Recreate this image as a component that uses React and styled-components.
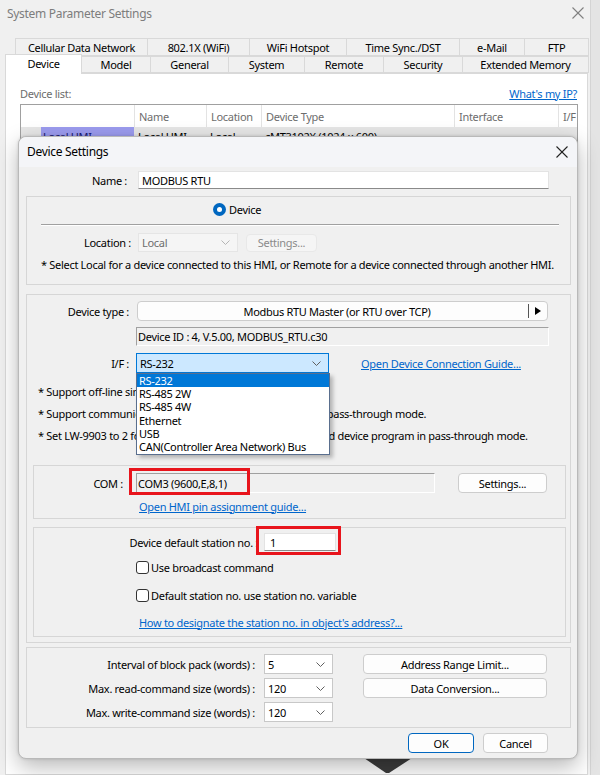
import React from "react";
import styled, { createGlobalStyle } from "styled-components";

const FONT = `"Segoe UI", "Noto Sans", "Open Sans", sans-serif`;

const GlobalStyle = createGlobalStyle`
  html, body { margin: 0; padding: 0; background: #ececec; }
  body { font-family: ${FONT}; font-size: 11px; letter-spacing: -0.3px; color: #000; }
  * { box-sizing: border-box; }
`;

const Screen = styled.div`
  position: relative;
  width: 600px;
  height: 775px;
  overflow: hidden;
  display: flex;
`;

const Window = styled.div`
  width: 591px;
  height: 775px;
  background: #f0f0f0;
  border-right: 1px solid #d4d4d4;
  display: flex;
  flex-direction: column;
`;

const Backdrop = styled.div`
  flex: 1;
  background: #e4e4e4;
`;

const WinTitleBar = styled.div`
  height: 38px;
  flex: none;
  display: flex;
  align-items: flex-start;
  justify-content: space-between;
  padding: 5px 6px 0 7px;
  color: #7d7d7d;
  font-size: 12px;
`;

const CloseGlyph = styled.svg`
  width: 12px;
  height: 12px;
  margin-top: 2px;
  stroke: ${(p) => p.$color || "#808080"};
  stroke-width: 1.1;
`;

const TabRow = styled.div`
  display: flex;
  height: ${(p) => p.$h}px;
  margin-left: ${(p) => p.$left}px;
  align-items: flex-end;
`;

const Tab = styled.div`
  width: ${(p) => p.$w}px;
  height: ${(p) => (p.$active ? p.$h + 3 : p.$h)}px;
  margin-left: -1px;
  margin-bottom: ${(p) => (p.$active ? -1 : 0)}px;
  border: 1px solid #d9d9d9;
  border-bottom: ${(p) => (p.$active ? "none" : "1px solid #d9d9d9")};
  background: ${(p) => (p.$active ? "#ffffff" : "#f0f0f0")};
  display: flex;
  align-items: center;
  justify-content: center;
  padding-bottom: ${(p) => (p.$active ? 2 : 0)}px;
  font-size: 11px;
  color: #000;
  position: relative;
  z-index: ${(p) => (p.$active ? 2 : 1)};
  &:first-child { margin-left: 0; }
`;

const Panel = styled.div`
  flex: 1;
  margin: 0 2px 0 5px;
  background: #ffffff;
  border: 1px solid #d9d9d9;
  padding: 11px 10px 0 14px;
`;

const ListHeader = styled.div`
  display: flex;
  justify-content: space-between;
  align-items: center;
  height: 16px;
  color: #6d6d6d;
`;

const Link = styled.span`
  color: #0066cc;
  text-decoration: underline;
  text-underline-offset: 1px;
  white-space: nowrap;
  margin-left: ${(p) => p.$ml || 0}px;
`;

const Table = styled.div`
  margin-top: 3px;
  width: 558px;
  border: 1px solid #a0a0a0;
  border-bottom: none;
`;

const TRow = styled.div`
  display: grid;
  grid-template-columns: 113px 72px 55px 193px 104px 1fr;
  height: ${(p) => p.$h}px;
  background: ${(p) => p.$bg || "#ffffff"};
`;

const TCell = styled.div`
  padding-left: 4px;
  display: flex;
  align-items: center;
  color: ${(p) => p.$color || "#000"};
  border-left: ${(p) => (p.$sep ? "1px solid #e3e3e3" : "none")};
  white-space: nowrap;
  overflow: hidden;
`;

const FirstCell = styled.div`
  display: flex;
  align-items: center;
  padding-left: 6px;
`;

const Chevron = styled.span`
  width: 14px;
  font-size: 10px;
  color: #222;
`;

const HmiHighlight = styled.div`
  flex: 1;
  height: 100%;
  background: #9b9bee;
  color: #1a1a6e;
  padding-left: 2px;
  display: flex;
  align-items: center;
`;

/* ---------- dialog ---------- */

const Dialog = styled.div`
  position: absolute;
  left: 18px;
  top: 136px;
  width: 560px;
  height: 623px;
  background: #f0f0f0;
  border: 1px solid #b9b9b9;
  border-radius: 8px;
  box-shadow: 0 8px 22px rgba(0, 0, 0, 0.28), 0 0 3px rgba(0, 0, 0, 0.15);
  display: flex;
  flex-direction: column;
  z-index: 5;
`;

const DlgTitle = styled.div`
  height: 30px;
  flex: none;
  display: flex;
  align-items: center;
  justify-content: space-between;
  padding: 0 9px 2px 8px;
  background: #f4f5f8;
  border-radius: 8px 8px 0 0;
  font-size: 12px;
`;

const DlgBody = styled.div`
  padding: 0 6px 0 7px;
  display: flex;
  flex-direction: column;
`;

const Row = styled.div`
  display: flex;
  align-items: center;
  position: relative;
  margin-top: ${(p) => p.$mt || 0}px;
  margin-left: ${(p) => p.$ml || 0}px;
  height: ${(p) => p.$h || 20}px;
`;

const Label = styled.div`
  width: ${(p) => p.$w}px;
  flex: none;
  text-align: right;
  white-space: nowrap;
  margin-right: ${(p) => p.$gap || 0}px;
  color: #000;
`;

const TextInput = styled.div`
  width: ${(p) => p.$w}px;
  height: ${(p) => p.$h || 18}px;
  background: #ffffff;
  border: 1px solid #e3e3e3;
  border-bottom: 1px solid #8a8a8a;
  display: flex;
  align-items: center;
  padding-left: ${(p) => p.$pl || 3}px;
`;

const ReadOnlyField = styled.div`
  width: ${(p) => p.$w}px;
  height: ${(p) => p.$h || 19}px;
  margin-left: ${(p) => p.$ml || 0}px;
  background: #f0f0f0;
  border-top: 1px solid #a0a0a0;
  border-left: 1px solid #a0a0a0;
  border-right: 1px solid #ffffff;
  border-bottom: 1px solid #ffffff;
  display: flex;
  align-items: center;
  padding-left: 1px;
  white-space: nowrap;
`;

const Combo = styled.div`
  position: relative;
  width: ${(p) => p.$w}px;
  height: ${(p) => p.$h || 20}px;
  flex: none;
  background: ${(p) => (p.$focus ? "#cce8ff" : p.$disabled ? "#f5f5f5" : "#ffffff")};
  border: 1px solid ${(p) => (p.$focus ? "#0078d7" : p.$disabled ? "#e5e5e5" : "#c8c8c8")};
  color: ${(p) => (p.$disabled ? "#6d6d6d" : "#000")};
  display: flex;
  align-items: center;
  justify-content: space-between;
  padding: 0 7px 0 3px;
`;

const ChevronSvg = styled.svg`
  width: 9px;
  height: 5px;
  fill: none;
  stroke: ${(p) => (p.$disabled ? "#b5b5b5" : "#606060")};
  stroke-width: 1;
`;

const Button = styled.div`
  width: ${(p) => p.$w}px;
  height: ${(p) => p.$h || 20}px;
  flex: none;
  margin-left: ${(p) => p.$ml || 0}px;
  background: ${(p) => (p.$disabled ? "#f5f5f5" : "#fdfdfd")};
  border: ${(p) => (p.$primary ? "1.5px solid #0067c0" : "1px solid " + (p.$disabled ? "#e8e8e8" : "#cdcdcd"))};
  border-radius: 4px;
  color: ${(p) => (p.$disabled ? "#8a8a8a" : "#000")};
  display: flex;
  align-items: center;
  justify-content: center;
  white-space: nowrap;
`;

const Group = styled.div`
  position: relative;
  margin-top: ${(p) => p.$mt || 0}px;
  height: ${(p) => p.$h}px;
  border: 1px solid #d6d6d6;
  display: flex;
  flex-direction: column;
  padding: ${(p) => p.$pad || "0"};
`;

const Separator = styled.div`
  margin: 7px 11px 0 14px;
  border-top: 1px solid #a0a0a0;
  border-bottom: 1px solid #ffffff;
`;

const Note = styled.div`
  margin-left: ${(p) => p.$ml || 0}px;
  margin-top: ${(p) => p.$mt || 0}px;
  height: ${(p) => p.$h || 22}px;
  display: flex;
  align-items: center;
  white-space: nowrap;
`;

const Radio = styled.span`
  width: 13px;
  height: 13px;
  border-radius: 50%;
  background: #0067c0;
  display: inline-flex;
  align-items: center;
  justify-content: center;
  margin-right: 3px;
  &::after {
    content: "";
    width: 5px;
    height: 5px;
    border-radius: 50%;
    background: #ffffff;
  }
`;

const Checkbox = styled.span`
  width: 13px;
  height: 13px;
  border: 1px solid #333333;
  border-radius: 3px;
  background: #ffffff;
  margin-right: 2px;
  flex: none;
`;

const DevTypeButton = styled.div`
  width: 411px;
  height: 20px;
  background: #fdfdfd;
  border: 1px solid #cdcdcd;
  border-radius: 4px;
  display: flex;
  align-items: center;
`;

const DevTypeText = styled.div`
  flex: 1;
  text-align: center;
  padding-left: 8px;
`;

const DevTypeArrow = styled.div`
  width: 18px;
  height: 14px;
  border-left: 1px solid #555;
  display: flex;
  align-items: center;
  justify-content: center;
  margin-right: 1px;
`;

const DropList = styled.div`
  position: absolute;
  left: -1px;
  top: 19px;
  width: 194px;
  background: #ffffff;
  border: 1px solid #5a6f8e;
  box-shadow: 3px 3px 4px rgba(0, 0, 0, 0.25);
  z-index: 10;
  padding-bottom: 1px;
`;

const DropItem = styled.div`
  height: 13.2px;
  line-height: 13px;
  padding-left: 2px;
  font-size: 11px;
  background: ${(p) => (p.$sel ? "#0078d7" : "transparent")};
  color: ${(p) => (p.$sel ? "#ffffff" : "#000")};
  white-space: nowrap;
`;

const RedMark = styled.span`
  position: absolute;
  left: ${(p) => p.$l}px;
  top: ${(p) => p.$t}px;
  width: ${(p) => p.$w}px;
  height: ${(p) => p.$h}px;
  border: 3px solid #e8141c;
  pointer-events: none;
`;

const Grid3 = styled.div`
  display: grid;
  grid-template-columns: 228px 69px 184px;
  column-gap: 9px;
  grid-auto-rows: 20px;
  row-gap: 4px;
  margin-top: 6px;
  align-items: center;
  & > :nth-child(3n) { margin-left: 21px; }
`;

const Footer = styled.div`
  display: flex;
  justify-content: flex-end;
  gap: 9px;
  margin-top: 5px;
  padding-right: 23px;
`;

const CursorShape = styled.svg`
  position: absolute;
  left: 364px;
  top: 758px;
  width: 48px;
  height: 17px;
  z-index: 1;
`;

const Chev = ({ disabled }) => (
  <ChevronSvg $disabled={disabled} viewBox="0 0 9 5">
    <polyline points="0.5,0.5 4.5,4.5 8.5,0.5" />
  </ChevronSvg>
);

const row1 = [
  ["Cellular Data Network", 133],
  ["802.1X (WiFi)", 103],
  ["WiFi Hotspot", 98],
  ["Time Sync./DST", 114],
  ["e-Mail", 66],
  ["FTP", 65],
];
const row2 = [
  ["Device", 77],
  ["Model", 70],
  ["General", 79],
  ["System", 77],
  ["Remote", 80],
  ["Security", 80],
  ["Extended Memory", 127],
];

const ifOptions = ["RS-232", "RS-485 2W", "RS-485 4W", "Ethernet", "USB", "CAN(Controller Area Network) Bus"];

export default function App() {
  return (
    <Screen>
      <GlobalStyle />
      <Window>
        <WinTitleBar>
          <span>System Parameter Settings</span>
          <CloseGlyph viewBox="0 0 12 12">
            <line x1="0.5" y1="0.5" x2="11.5" y2="11.5" />
            <line x1="11.5" y1="0.5" x2="0.5" y2="11.5" />
          </CloseGlyph>
        </WinTitleBar>
        <TabRow $h={18} $left={15}>
          {row1.map(([t, w]) => (
            <Tab key={t} $w={w} $h={18}>{t}</Tab>
          ))}
        </TabRow>
        <TabRow $h={17} $left={5}>
          {row2.map(([t, w], i) => (
            <Tab key={t} $w={w} $h={17} $active={i === 0}>{t}</Tab>
          ))}
        </TabRow>
        <Panel>
          <ListHeader>
            <span>Device list:</span>
            <Link>What's my IP?</Link>
          </ListHeader>
          <Table>
            <TRow $h={22}>
              <TCell />
              <TCell $sep $color="#6d6d6d">Name</TCell>
              <TCell $sep $color="#6d6d6d">Location</TCell>
              <TCell $sep $color="#6d6d6d">Device Type</TCell>
              <TCell $sep $color="#6d6d6d">Interface</TCell>
              <TCell $sep $color="#6d6d6d">I/F</TCell>
            </TRow>
            <TRow $h={18} $bg="#e6e6e6">
              <FirstCell>
                <Chevron>⌄</Chevron>
                <HmiHighlight>Local HMI</HmiHighlight>
              </FirstCell>
              <TCell>Local HMI</TCell>
              <TCell>Local</TCell>
              <TCell>cMT3102X (1024 x 600)</TCell>
              <TCell>-</TCell>
              <TCell>-</TCell>
            </TRow>
          </Table>
        </Panel>
      </Window>
      <Backdrop />

      <CursorShape viewBox="0 0 48 17">
        <polygon points="0,0 48,0 25,15 22,15" fill="#3c3c3c" />
      </CursorShape>

      <Dialog>
        <DlgTitle>
          <span>Device Settings</span>
          <CloseGlyph $color="#222" viewBox="0 0 12 12">
            <line x1="0.5" y1="0.5" x2="11.5" y2="11.5" />
            <line x1="11.5" y1="0.5" x2="0.5" y2="11.5" />
          </CloseGlyph>
        </DlgTitle>
        <DlgBody>
          <Row $mt={4} $h={18}>
            <Label $w={101} $gap={11}>Name :</Label>
            <TextInput $w={411}>MODBUS RTU</TextInput>
          </Row>

          <Group $mt={7} $h={89}>
            <Row $mt={4} $h={16} $ml={186}>
              <Radio />
              <span>Device</span>
            </Row>
            <Separator />
            <Row $mt={7} $h={19}>
              <Label $w={104} $gap={7}>Location :</Label>
              <Combo $w={100} $h={19} $disabled>
                <span>Local</span>
                <Chev disabled />
              </Combo>
              <Button $w={71} $h={18} $ml={8} $disabled>Settings...</Button>
            </Row>
            <Note $ml={14} $mt={1} $h={22}>
              * Select Local for a device connected to this HMI, or Remote for a device connected through another HMI.
            </Note>
          </Group>

          <Group $mt={9} $h={349} $pad="0 4px 0 6px">
            <Row $mt={6} $h={20}>
              <Label $w={96} $gap={8}>Device type :</Label>
              <DevTypeButton>
                <DevTypeText>Modbus RTU Master (or RTU over TCP)</DevTypeText>
                <DevTypeArrow>
                  <svg width="6" height="8" viewBox="0 0 6 8">
                    <polygon points="0,0 6,4 0,8" fill="#000" />
                  </svg>
                </DevTypeArrow>
              </DevTypeButton>
            </Row>
            <Row $mt={6} $h={19}>
              <ReadOnlyField $w={413} $ml={103}>Device ID : 4, V.5.00, MODBUS_RTU.c30</ReadOnlyField>
            </Row>
            <Row $mt={7} $h={20}>
              <Label $w={96} $gap={7}>I/F :</Label>
              <Combo $w={193} $focus>
                <span>RS-232</span>
                <Chev />
                <DropList>
                  {ifOptions.map((o, i) => (
                    <DropItem key={o} $sel={i === 0}>{o}</DropItem>
                  ))}
                </DropList>
              </Combo>
              <Link $ml={32}>Open Device Connection Guide...</Link>
            </Row>
            <Note $ml={5} $mt={7}>* Support off-line simulation on PC.</Note>
            <Note $ml={5}>* Support communication with the PLC via HMI in Ethernet pass-through mode.</Note>
            <Note $ml={5}>* Set LW-9903 to 2 for downloading PLC program/embedded device program in pass-through mode.</Note>

            <Group $mt={19} $h={54}>
              <Row $mt={7} $h={20}>
                <Label $w={89} $gap={13}>COM :</Label>
                <ReadOnlyField $w={299} $h={20}>COM3 (9600,E,8,1)</ReadOnlyField>
                <Button $w={89} $ml={23}>Settings...</Button>
                <RedMark $l={95} $t={-5} $w={121} $h={27} />
              </Row>
              <Row $mt={5} $h={16} $ml={105}>
                <Link>Open HMI pin assignment guide...</Link>
              </Row>
            </Group>

            <Group $mt={8} $h={110}>
              <Row $mt={5} $h={18}>
                <Label $w={224} $gap={6}>Device default station no. :</Label>
                <TextInput $w={72} $pl={5}>1</TextInput>
                <RedMark $l={222} $t={-7} $w={85} $h={29} />
              </Row>
              <Row $mt={8} $h={16} $ml={102}>
                <Checkbox />
                <span>Use broadcast command</span>
              </Row>
              <Row $mt={12} $h={16} $ml={102}>
                <Checkbox />
                <span>Default station no. use station no. variable</span>
              </Row>
              <Row $mt={11} $h={16} $ml={105}>
                <Link>How to designate the station no. in object's address?...</Link>
              </Row>
            </Group>
          </Group>

          <Group $mt={4} $h={81}>
            <Grid3>
              <Label $w={228}>Interval of block pack (words) :</Label>
              <Combo $w={69}><span>5</span><Chev /></Combo>
              <Button $w={184}>Address Range Limit...</Button>
              <Label $w={228}>Max. read-command size (words) :</Label>
              <Combo $w={69}><span>120</span><Chev /></Combo>
              <Button $w={184}>Data Conversion...</Button>
              <Label $w={228}>Max. write-command size (words) :</Label>
              <Combo $w={69}><span>120</span><Chev /></Combo>
            </Grid3>
          </Group>

          <Footer>
            <Button $w={66} $primary>OK</Button>
            <Button $w={65}>Cancel</Button>
          </Footer>
        </DlgBody>
      </Dialog>
    </Screen>
  );
}
